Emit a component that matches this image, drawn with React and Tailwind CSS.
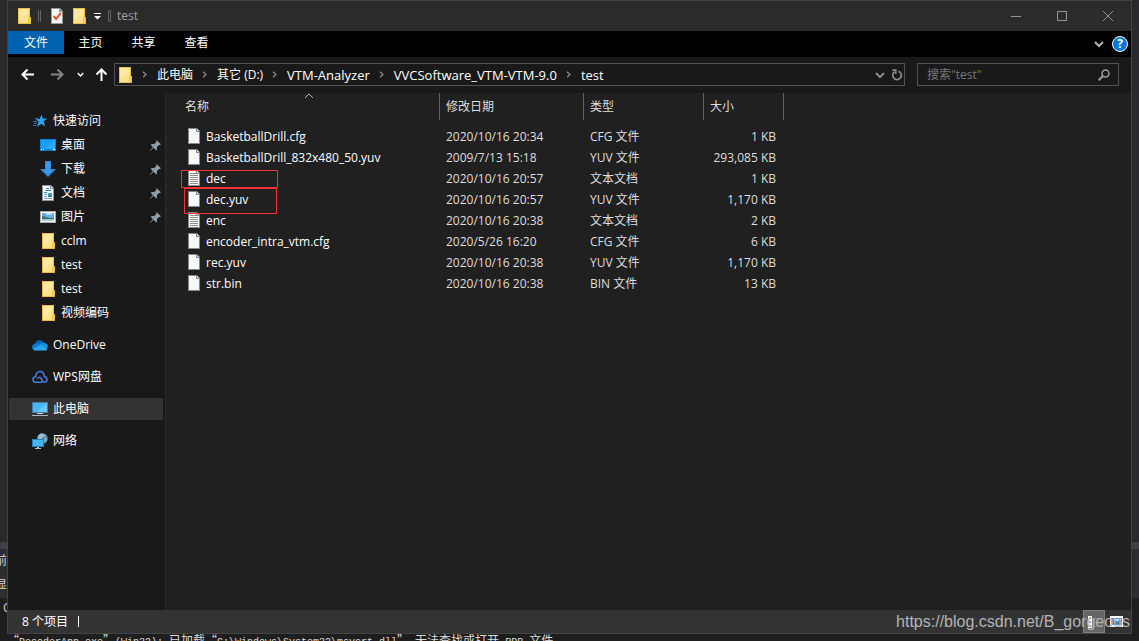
import { useState } from "react";

const places = [
  { label: "桌面", icon: DesktopIcon, pinned: true },
  { label: "下载", icon: DownloadIcon, pinned: true },
  { label: "文档", icon: DocumentIcon, pinned: true },
  { label: "图片", icon: PictureIcon, pinned: true },
  { label: "cclm", icon: FolderIcon },
  { label: "test", icon: FolderIcon },
  { label: "test", icon: FolderIcon },
  { label: "视频编码", icon: FolderIcon },
];

const roots = [
  { label: "OneDrive", icon: CloudIcon },
  { label: "WPS网盘", icon: WpsIcon },
  { label: "此电脑", icon: ComputerIcon, active: true },
  { label: "网络", icon: NetworkIcon },
];

const files = [
  { name: "BasketballDrill.cfg", date: "2020/10/16 20:34", type: "CFG 文件", size: "1 KB" },
  { name: "BasketballDrill_832x480_50.yuv", date: "2009/7/13 15:18", type: "YUV 文件", size: "293,085 KB" },
  { name: "dec", date: "2020/10/16 20:57", type: "文本文档", size: "1 KB", text: true, mark: "left-[15px] top-[2px] w-[97px] h-[18px]" },
  { name: "dec.yuv", date: "2020/10/16 20:57", type: "YUV 文件", size: "1,170 KB", mark: "left-[18px] -top-px w-[93px] h-[26px]" },
  { name: "enc", date: "2020/10/16 20:38", type: "文本文档", size: "2 KB", text: true },
  { name: "encoder_intra_vtm.cfg", date: "2020/5/26 16:20", type: "CFG 文件", size: "6 KB" },
  { name: "rec.yuv", date: "2020/10/16 20:38", type: "YUV 文件", size: "1,170 KB" },
  { name: "str.bin", date: "2020/10/16 20:38", type: "BIN 文件", size: "13 KB" },
];

const crumbs = [
  { label: "此电脑" },
  { label: "其它 (D:)" },
  { label: "VTM-Analyzer", latin: true },
  { label: "VVCSoftware_VTM-VTM-9.0", latin: true },
  { label: "test", latin: true },
];

const outputLine = "“DecoderApp.exe”(Win32): 已加载“C:\\Windows\\System32\\msvcrt.dll”。无法查找或打开 PDB 文件。";

function FolderIcon() {
  return (
    <svg width="16" height="16" viewBox="0 0 16 16" className="shrink-0">
      <path d="M2 0h12v9h1v7H2z" fill="#e8bd45" />
      <path d="M3 1h10v8l-1 1v5H3z" fill="#ffe38c" />
      <path d="M3 1h10v3L3 12z" fill="#ffe9a3" />
      <path d="M13 10h1v5h-1z" fill="#ffdb6e" />
    </svg>
  );
}

function StarIcon() {
  return (
    <svg width="16" height="16" viewBox="0 0 16 16" className="shrink-0">
      <path d="M8.500 1.500l1.300 4 4.400-.1-3.500 2.900 1.400 5.200L8.200 10.700l-4.200 3.200 1.700-5.100-3.100-2.600 4.100-.1z" fill="#2ea3f2" />
      <path d="M2 5.500h3M0 8.500h4M1 10.500h3M0 12.500h3" stroke="#1b7cc4" strokeWidth="1" />
    </svg>
  );
}

function DesktopIcon() {
  return (
    <svg width="16" height="16" viewBox="0 0 16 16" className="shrink-0">
      <path d="M0 2h16v12H0z" fill="#0a84d8" />
      <path d="M1 3h14v9H1z" fill="#16a0fb" />
      <path d="M15 3v9H5z" fill="#2eabff" />
      <path d="M1 12.500h1M3 12.500h1M13 12.500h2" stroke="#fff" />
    </svg>
  );
}

function DownloadIcon() {
  return (
    <svg width="16" height="16" viewBox="0 0 16 16" className="shrink-0">
      <path d="M5 0h6v8h5l-8 8-8-8h5z" fill="#2f86d8" />
      <path d="M6 1h4v8h3.500L8 14.500 2.500 9H6z" fill="#3e97e8" />
    </svg>
  );
}

function DocumentIcon() {
  return (
    <svg width="16" height="16" viewBox="0 0 16 16" className="shrink-0">
      <path d="M2 0h9l3 3v13H2z" fill="#8e9498" />
      <path d="M3 1h7v3h3v11H3z" fill="#fff" />
      <path d="M11 1l2 2h-2z" fill="#e5e8ea" />
      <path d="M6 3.500h3M5 5.500h6M4 7.500h3" stroke="#2385c5" />
      <path d="M4 9.500h3M4 11.500h3M4 13.500h8" stroke="#6aa4c9" />
      <path d="M8 8h4v4H8z" fill="#3f9ac6" />
      <path d="M8 11l2-1 2 1v1H8z" fill="#46765d" />
    </svg>
  );
}

function PictureIcon({ size = 16 }) {
  return (
    <svg width={size} height={size} viewBox="0 0 16 16" className="shrink-0">
      <path d="M0 2h16v12H0z" fill="#a7adb3" />
      <path d="M1 3h14v10H1z" fill="#fff" />
      <path d="M2 4h12v8H2z" fill="#68aee6" />
      <path d="M5 4h7v2H7z" fill="#bfe0f8" />
      <path d="M2 7l4 1 3 1h5v1H2z" fill="#346f63" />
      <path d="M2 10h12v2H2z" fill="#9fc7d8" />
    </svg>
  );
}

function CloudIcon() {
  return (
    <svg width="16" height="16" viewBox="0 0 16 16" className="shrink-0">
      <path d="M3 7C4 3 9 1 12.300 6l-4 3z" fill="#0364b8" />
      <path d="M12 6c3 0 4 2 4 4l-3 3-6-5c2-2 3-2 5-2z" fill="#1490df" />
      <path d="M4 6.300C2 6.500 0 8 0 10.300 0 12 1.500 13 3 13l6-4.500C7.500 7 6 6 4 6.300z" fill="#0f78d4" />
      <path d="M1 12l7-4 7.500 4c-.5 1-1.500 1.500-2.500 1.500H3.500C2.500 13.500 1.500 13 1 12z" fill="#28a8ea" />
    </svg>
  );
}

function WpsIcon() {
  return (
    <svg width="16" height="16" viewBox="0 0 16 16" className="shrink-0" fill="none" stroke="#477be8" strokeWidth="1.500">
      <path d="M10.500 13.200H3.500C2 13.200 1 12 1 10.500S2 8 3.700 7.800C3.600 4.500 5.500 2.600 8 2.600s4.200 1.800 4.300 4.900C14 7.800 15 8.900 15 10.500s-1 2.700-2.500 2.700c-2.200 0-2.300-1.800-3.200-3.600-.9-1.700-3.300-1.600-3.900.1" />
    </svg>
  );
}

function ComputerIcon() {
  return (
    <svg width="16" height="16" viewBox="0 0 16 16" className="shrink-0">
      <path d="M0 1h16v11H0z" fill="#477ca0" />
      <path d="M1 2h14v9H1z" fill="#47b7fb" />
      <path d="M15 2v9H5z" fill="#69c8ff" />
      <path d="M5 12h6v1H5z" fill="#c6d0d8" />
      <path d="M0 14h16v1H0z" fill="#aab5c4" />
    </svg>
  );
}

function NetworkIcon() {
  return (
    <svg width="16" height="16" viewBox="0 0 16 16" className="shrink-0">
      <circle cx="10.500" cy="5.500" r="5.300" fill="#527f99" />
      <path d="M8 1c2-1 5 0 6 2l-3 1-2 3H6C5 4 6 2 8 1z" fill="#92bfd0" />
      <path d="M12 5l3-1v4l-3 2z" fill="#79abc0" />
      <path d="M0 6h12v8H0z" fill="#237fbd" />
      <path d="M1 7h10v6H1z" fill="#43b5f8" />
      <path d="M3 15.500h6" stroke="#b4bdc6" />
      <path d="M5 14h2v1H5z" fill="#b4bdc6" />
    </svg>
  );
}

function PinIcon() {
  return (
    <svg width="11" height="11" viewBox="0 0 11 11" className="shrink-0" fill="#929ca5">
      <path d="M6.500 0L11 4.200 9.800 5l-.8-.1-2 2v2.600L6 10.300 3.600 7.800.6 10.700 0 11l.3-.8L3 7.200.8 5l1-1h2.500l2-2z" />
    </svg>
  );
}

function FileIcon({ lines }) {
  return (
    <svg width="12" height="16" viewBox="0 0 12 16" className="mb-px shrink-0">
      <path d="M0 0h9l3 3v13H0z" fill="#85888a" />
      <path d="M1 1h7v3h3v11H1z" fill="#f7f8f8" />
      <path d="M9 1l2 2H9z" fill="#e7e7e7" />
      {lines && <path d="M2 3.500h6M2 5.500h8M2 7.500h8M2 9.500h8M2 11.500h8M2 13.500h8" stroke="#8b8b8b" />}
    </svg>
  );
}

function Chevron({ className, width = 10, stroke = 2 }) {
  return (
    <svg width={width} height={width} viewBox="0 0 10 10" className={className} fill="none" stroke="currentColor" strokeWidth={stroke}>
      <path d="M1 3l4 4 4-4" />
    </svg>
  );
}

function Arrow({ className }) {
  return (
    <svg width="13" height="13" viewBox="0 0 13 13" className={className} fill="none" stroke="currentColor" strokeWidth="2">
      <path d="M13 6.500H1.500M6.500 1.500l-5 5 5 5" />
    </svg>
  );
}

function TitleBar() {
  return (
    <header className="flex h-[31px] shrink-0 items-center border-t border-[#434343] bg-[#2b2b2b] pl-2">
      <FolderIcon />
      <span className="ml-[6px] h-3 w-[3px] border-x border-[#646464]" />
      <button aria-label="属性" className="ml-[10px]">
        <svg width="12" height="16" viewBox="0 0 12 16">
          <path d="M0 0h9l3 3v13H0z" fill="#999" />
          <path d="M1 1h7v3h3v11H1z" fill="#fafafa" />
          <path d="M2.500 8l2.500 3 5-6" fill="none" stroke="#e8552b" strokeWidth="2" />
        </svg>
      </button>
      <button aria-label="新建文件夹" className="ml-2">
        <FolderIcon />
      </button>
      <button aria-label="自定义快速访问工具栏" className="ml-[7px]">
        <svg width="7" height="7" viewBox="0 0 7 7" fill="#fff">
          <path d="M0 0h7v1H0zM0 3h7L3.500 6.500z" />
        </svg>
      </button>
      <span className="ml-[7px] h-3 w-[3px] border-x border-[#646464]" />
      <h1 className="ml-[6px] text-[#a0a0a0]">test</h1>
      <div className="ml-auto flex text-[#929292]">
        <button aria-label="最小化" className="flex h-[30px] w-[46px] items-center justify-center">
          <span className="h-px w-[10px] bg-current" />
        </button>
        <button aria-label="最大化" className="flex h-[30px] w-[46px] items-center justify-center">
          <span className="size-[10px] border border-current" />
        </button>
        <button aria-label="关闭" className="flex h-[30px] w-[46px] items-center justify-center">
          <svg width="10" height="10" viewBox="0 0 10 10" stroke="currentColor">
            <path d="M0 0l10 10M10 0L0 10" />
          </svg>
        </button>
      </div>
    </header>
  );
}

function Ribbon() {
  return (
    <div className="flex h-[26px] shrink-0 items-start bg-black">
      <button className="h-[23px] w-14 bg-[#0063b1] pt-px">文件</button>
      <button className="h-[23px] w-[53px] pt-px">主页</button>
      <button className="h-[23px] w-[53px] pt-px">共享</button>
      <button className="h-[23px] w-[53px] pt-px">查看</button>
      <div className="ml-auto flex h-full items-center gap-2 pr-[3px]">
        <button aria-label="展开功能区">
          <Chevron className="text-[#b5b5b5]" />
        </button>
        <button aria-label="帮助" className="flex size-4 items-center justify-center rounded-full border border-white bg-[#0078d7] text-xs font-bold">
          ?
        </button>
      </div>
    </div>
  );
}

function AddressRow({ query, setQuery }) {
  return (
    <div className="flex h-9 shrink-0 items-center pr-3 pb-px pl-[13px]">
      <button aria-label="后退">
        <Arrow />
      </button>
      <button aria-label="前进" className="ml-[17px]">
        <Arrow className="rotate-180 text-[#858585]" />
      </button>
      <button aria-label="最近位置" className="ml-[13px]">
        <Chevron width={7} />
      </button>
      <button aria-label="上移" className="ml-[11px]">
        <Arrow className="rotate-90" />
      </button>
      <nav aria-label="地址" className="ml-[6px] flex h-[23px] min-w-0 flex-1 items-center border border-[#535353] pl-[2px]">
        <FolderIcon />
        <ol className="flex min-w-0 items-center">
          {crumbs.map(({ label, latin }) => (
            <li key={label} className="flex items-center whitespace-nowrap">
              <Chevron width={7} className="mr-[9px] ml-2 -rotate-90 text-[#858585]" />
              <a href="#" className={latin ? "text-[13px] leading-4" : "leading-4"}>
                {label}
              </a>
            </li>
          ))}
        </ol>
        <button aria-label="历史记录" className="ml-auto">
          <Chevron className="text-[#8c8c8c]" />
        </button>
        <button aria-label="刷新" className="mr-px ml-[6px]">
          <svg width="12" height="12" viewBox="0 0 12 12" fill="none" stroke="#8c8c8c" strokeWidth="1.700">
            <path d="M7.500 2.200A4.300 4.300 0 1 1 3.200 3" />
            <path d="M1.500 1.200h3.200v3.600" />
          </svg>
        </button>
      </nav>
      <label className="ml-3 flex h-[23px] w-[202px] items-center border border-[#535353] pr-2 pl-[9px]">
        <input
          aria-label="搜索"
          className="min-w-0 flex-1 bg-transparent outline-none placeholder:text-[#777777]"
          placeholder={'搜索"test"'}
          value={query}
          onChange={(e) => setQuery(e.target.value)}
        />
        <svg width="12" height="12" viewBox="0 0 12 12" fill="none" stroke="#a0a0a0">
          <circle cx="7.500" cy="4.500" r="3.500" strokeWidth="1.500" />
          <path d="M5 7L.7 11.300" strokeWidth="2" />
        </svg>
      </label>
    </div>
  );
}

function Sidebar() {
  return (
    <nav aria-label="导航" className="w-[158px] shrink-0 border-r border-[#2b2b2b] pt-4">
      <a href="#" className="flex h-6 items-center gap-1 pl-[25px]">
        <StarIcon />
        快速访问
      </a>
      <ul>
        {places.map(({ label, icon: Icon, pinned }, i) => (
          <li key={i}>
            <a href="#" className="flex h-6 items-center gap-[5px] pr-[4px] pl-8">
              <Icon />
              <span className="flex-1">{label}</span>
              {pinned && <PinIcon />}
            </a>
          </li>
        ))}
      </ul>
      <ul className="mt-[9px] flex flex-col gap-[10px]">
        {roots.map(({ label, icon: Icon, active }) => (
          <li key={label} className={active ? "mr-[2px] ml-px bg-[#333333]" : "mr-[2px] ml-px"}>
            <a href="#" className="flex h-[22px] items-center gap-[5px] pl-[23px]">
              <Icon />
              {label}
            </a>
          </li>
        ))}
      </ul>
    </nav>
  );
}

function FileTable({ rows }) {
  return (
    <main className="min-w-0 flex-1 bg-[#202020]">
      <table className="table-fixed border-separate border-spacing-0 text-left">
        <colgroup>
          <col className="w-[274px]" />
          <col className="w-36" />
          <col className="w-[120px]" />
          <col className="w-20" />
        </colgroup>
        <thead className="text-[#dedede]">
          <tr className="h-[27px]">
            <th className="relative border-r border-[#636363] p-0 pl-[19px] font-normal">
              名称
              <Chevron stroke={1} className="absolute -top-[2px] left-[138px] rotate-180 text-[#b0b0b0]" />
            </th>
            <th className="border-r border-[#636363] p-0 pl-[6px] font-normal">修改日期</th>
            <th className="border-r border-[#636363] p-0 pl-[6px] font-normal">类型</th>
            <th className="border-r border-[#636363] p-0 pl-[6px] font-normal">大小</th>
          </tr>
        </thead>
        <tbody className="before:block before:h-[6px] before:content-['']">
          {rows.map((file) => (
            <tr key={file.name} className="h-[21px] text-[#dedede]">
              <td className="relative p-0 pl-[22px] text-white">
                <span className="flex h-[21px] items-center gap-[6px]">
                  <FileIcon lines={file.text} />
                  {file.name}
                </span>
                {file.mark && <span className={`absolute z-10 border border-[#f03232] ${file.mark}`} />}
              </td>
              <td className="p-0 pl-[6px]">{file.date}</td>
              <td className="p-0 pl-[6px]">{file.type}</td>
              <td className="p-0 pr-2 text-right">{file.size}</td>
            </tr>
          ))}
        </tbody>
      </table>
    </main>
  );
}

function StatusBar() {
  return (
    <footer className="relative flex h-[23px] shrink-0 items-center bg-[#333333] pl-[14px]">
      <span>8 个项目</span>
      <span className="ml-[10px] h-[11px] w-px bg-white" />
      <div className="ml-auto flex h-full items-center">
        <button aria-label="详细信息" className="flex h-[23px] w-[22px] items-center border border-[#808080] bg-[#666666] pl-1">
          <svg width="14" height="14" viewBox="0 0 14 14">
            <path d="M0 1h4v12H0z" fill="#fff" />
            <path d="M1 3h2M1 7h2M1 11h2" stroke="#555" />
            <path d="M6 3.500h3M10 3.500h3M6 7.500h3M10 7.500h3M6 11.500h3M10 11.500h3" stroke="#858585" />
          </svg>
        </button>
        <button aria-label="大缩略图" className="flex w-[26px] pl-[5px]">
          <svg width="13" height="12" viewBox="0 0 13 12">
            <path d="M0 0h13v11H0z" fill="#fff" />
            <path d="M1 2h11v7H1z" fill="#4d8fdc" />
            <path d="M3 3h6v2H5z" fill="#b9dbf7" />
            <path d="M2 7l3-1 3 1h3v1H2z" fill="#4c7f78" />
          </svg>
        </button>
      </div>
      <span className="pointer-events-none absolute right-px font-['Liberation_Sans'] text-base text-[#b4b4b4]">
        https://blog.csdn.net/B_gorgeous
      </span>
    </footer>
  );
}

// half-width runs are set smaller so that two of them fill one full-width cell
function OutputLine({ text }) {
  return (
    <p className="h-[7px] shrink-0 overflow-hidden pl-[7px] font-['Noto_Sans_CJK_SC',sans-serif] leading-[12px] whitespace-nowrap text-[#dcdcdc]">
      {text.match(/[ -~]+|[^ -~]+/g).map((run, i) => (
        <span key={i} className={/^[ -~]/.test(run) ? "font-['Liberation_Mono',monospace] text-[10px]" : ""}>
          {run}
        </span>
      ))}
    </p>
  );
}

export default function App() {
  const [query, setQuery] = useState("");
  const rows = files.filter((f) => f.name.includes(query));

  return (
    <div className="flex h-screen flex-col overflow-hidden bg-[#1e1e1e] font-['Open_Sans','Noto_Sans_CJK_SC',sans-serif] text-xs text-white">
      <div className="flex min-h-0 flex-1">
        {/* editor showing on the left of the window */}
        <div className="flex w-[7px] shrink-0 flex-col overflow-hidden">
          <div className="flex-1 bg-[#2a2a2d]" />
          <div className="h-[7px] bg-[#3f3f46]" />
          <div className="flex h-[49px] flex-col items-end bg-[#2d2d30] text-[#d0d0d0]">
            <span className="leading-6">前</span>
            <span className="leading-6">显</span>
          </div>
          <div className="h-9 pt-[2px] pl-[3px] text-[#d0d0d0]">C</div>
        </div>
        <div className="flex min-w-0 flex-1 flex-col border-x border-b border-[#434343] bg-[#191919]">
          <TitleBar />
          <Ribbon />
          <AddressRow query={query} setQuery={setQuery} />
          <div className="flex min-h-0 flex-1">
            <Sidebar />
            <FileTable rows={rows} />
          </div>
          <StatusBar />
        </div>
        <div className="flex w-[7px] shrink-0 flex-col">
          <div className="flex-1 bg-[#2a2a2d]" />
          <div className="h-[7px] bg-[#3f3f46]" />
          <div className="h-[49px] bg-[#2d2d30]" />
          <div className="h-9" />
        </div>
      </div>
      <OutputLine text={outputLine} />
    </div>
  );
}
